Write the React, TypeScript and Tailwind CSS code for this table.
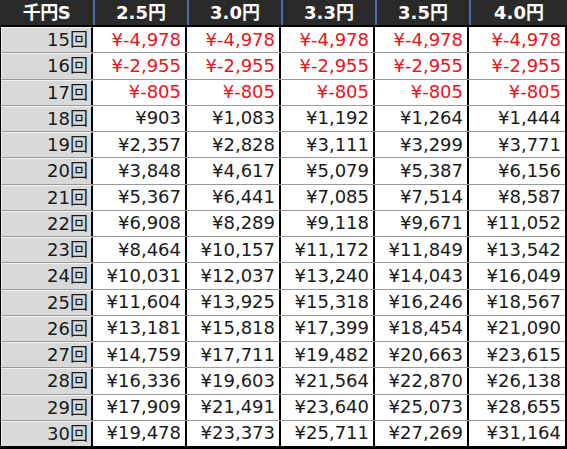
const rates = ["2.5円", "3.0円", "3.3円", "3.5円", "4.0円"];

const rows: [number, number[]][] = [
  [15, [-4978, -4978, -4978, -4978, -4978]],
  [16, [-2955, -2955, -2955, -2955, -2955]],
  [17, [-805, -805, -805, -805, -805]],
  [18, [903, 1083, 1192, 1264, 1444]],
  [19, [2357, 2828, 3111, 3299, 3771]],
  [20, [3848, 4617, 5079, 5387, 6156]],
  [21, [5367, 6441, 7085, 7514, 8587]],
  [22, [6908, 8289, 9118, 9671, 11052]],
  [23, [8464, 10157, 11172, 11849, 13542]],
  [24, [10031, 12037, 13240, 14043, 16049]],
  [25, [11604, 13925, 15318, 16246, 18567]],
  [26, [13181, 15818, 17399, 18454, 21090]],
  [27, [14759, 17711, 19482, 20663, 23615]],
  [28, [16336, 19603, 21564, 22870, 26138]],
  [29, [17909, 21491, 23640, 25073, 28655]],
  [30, [19478, 23373, 25711, 27269, 31164]],
];

const fmt = (n: number) =>
  n < 0 ? `¥-${(-n).toLocaleString("en-US")}` : `¥${n.toLocaleString("en-US")}`;

const widths = ["w-[95px]", "w-[94px]", "w-[94px]", "w-[94px]", "w-[94px]", "flex-1"];

export default function App() {
  return (
    <div className="w-[567px] h-[449px] bg-black flex flex-col font-['DejaVu_Sans','Noto_Sans_CJK_JP',sans-serif] overflow-hidden">
      {/* header */}
      <div className="flex h-[25px] bg-[#2a2a2a] text-white font-bold text-[18px] leading-none">
        <div className={`${widths[0]} flex items-center justify-center border-r-2 border-[#4a6ca8] tracking-tight`}>
          千円S
        </div>
        {rates.map((r, i) => (
          <div
            key={r}
            className={`${widths[i + 1]} flex items-center justify-center ${i < 4 ? "border-r-2 border-[#4a6ca8]" : ""}`}
          >
            {r}
          </div>
        ))}
      </div>
      <div className="h-[2px] bg-black" />
      {/* body */}
      <div className="flex-1 flex flex-col pl-px pr-[2px] pb-[3px]">
        {rows.map(([n, vals], ri) => (
          <div
            key={n}
            className={`flex-1 flex text-[18px] leading-none ${ri < rows.length - 1 ? "border-b border-[#9a9a9a]" : ""}`}
          >
            <div className="w-[92px] flex items-center justify-end pr-[3px] bg-[#d9d9d9] text-[#1a1a1a] border-t border-l border-[#f2f2f2] border-r-2 border-r-black">
              {n}回
            </div>
            {vals.map((v, i) => (
              <div
                key={i}
                className={`${i < 4 ? "w-[94px] border-r-2 border-black" : "flex-1"} flex items-center justify-end pr-[4px] bg-white ${v < 0 ? "text-[#e8141c]" : "text-[#1a1a1a]"}`}
              >
                {fmt(v)}
              </div>
            ))}
          </div>
        ))}
      </div>
    </div>
  );
}
